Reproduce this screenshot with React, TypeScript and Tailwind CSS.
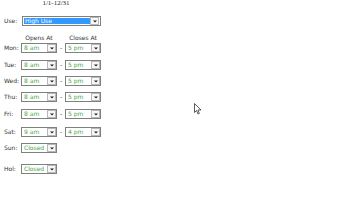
import React from "react";

function Arrow() {
  return (
    <div className="flex h-[8px] w-[9px] items-center justify-center border border-[#b8b8b8] bg-[#f7f7f7]">
      <svg width="4" height="3" viewBox="0 0 4 3">
        <polygon points="0,0.5 4,0.5 2,2.5" fill="#222" />
      </svg>
    </div>
  );
}

function Sel({ value, w = "w-[36px]" }: { value: string; w?: string }) {
  return (
    <div className={`flex h-[10px] ${w} items-center justify-between border border-[#808080] bg-white pl-[2px]`}>
      <span className="text-[6px] leading-[6px] text-[#46a846]">{value}</span>
      <Arrow />
    </div>
  );
}

function Row({ label, open, close, mt }: { label: string; open: string; close?: string; mt: string }) {
  return (
    <div className={`flex h-[10px] items-center ${mt}`}>
      <span className="w-[17px] text-[6px] leading-[6px] text-[#333]">{label}</span>
      <Sel value={open} />
      {close && (
        <>
          <span className="w-[8px] text-center text-[6px] leading-[6px] text-[#333]">-</span>
          <Sel value={close} />
        </>
      )}
    </div>
  );
}

export default function App() {
  return (
    <div className="relative h-[202px] w-[360px] overflow-hidden bg-white font-['DejaVu_Sans',sans-serif]">
      <div className="flex flex-col pl-[4px]">
        <div className="h-[7px] w-[104px] text-center font-['Liberation_Serif',serif] text-[7px] leading-[7px] text-[#222]">
          1/1-12/31
        </div>
        <div className="mt-[9px] flex h-[10px] items-center">
          <span className="w-[18px] text-[6px] leading-[6px] text-[#333]">Use:</span>
          <div className="flex h-[10px] w-[79px] items-center border border-[#808080] bg-white p-[1px]">
            <div className="flex h-full flex-1 items-center bg-[#3399ff] pl-[1px]">
              <span className="text-[6px] leading-[6px] text-white">High Use</span>
            </div>
            <Arrow />
          </div>
        </div>
        <div className="mt-[8px] flex h-[7px] items-center">
          <span className="w-[17px]" />
          <span className="w-[36px] text-center text-[6px] leading-[6px] text-[#333]">Opens At</span>
          <span className="w-[8px]" />
          <span className="w-[36px] text-center text-[6px] leading-[6px] text-[#333]">Closes At</span>
        </div>
        <Row label="Mon:" open="8 am" close="5 pm" mt="mt-[2px]" />
        <Row label="Tue:" open="8 am" close="5 pm" mt="mt-[7px]" />
        <Row label="Wed:" open="8 am" close="5 pm" mt="mt-[6px]" />
        <Row label="Thu:" open="8 am" close="5 pm" mt="mt-[6px]" />
        <Row label="Fri:" open="8 am" close="5 pm" mt="mt-[7px]" />
        <Row label="Sat:" open="9 am" close="4 pm" mt="mt-[8px]" />
        <Row label="Sun:" open="Closed" mt="mt-[6px]" />
        <Row label="Hol:" open="Closed" mt="mt-[11px]" />
      </div>
      <svg className="absolute left-[194px] top-[103px]" width="8" height="12" viewBox="0 0 8 12">
        <polygon points="0.5,0.5 0.5,9.5 2.5,7.5 4,11 5.3,10.4 3.9,7 7,7" fill="white" stroke="#333" strokeWidth="0.8" />
      </svg>
    </div>
  );
}
